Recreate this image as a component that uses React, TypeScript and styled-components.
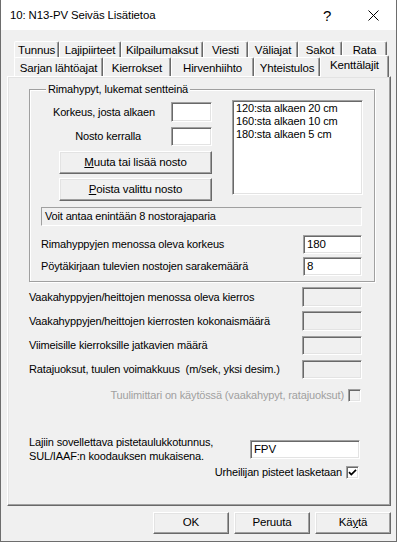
import React from "react";
import styled, { createGlobalStyle, css } from "styled-components";

const GlobalStyle = createGlobalStyle`
  html, body { margin: 0; padding: 0; background: #f0f0f0; }
  body {
    font-family: "Liberation Sans", Arial, sans-serif;
    font-size: 11px;
    color: #000;
  }
  * { box-sizing: border-box; }
`;

const sunken = css`
  border: 1px solid;
  border-color: #a0a0a0 #ffffff #ffffff #a0a0a0;
  box-shadow: inset 1px 1px 0 #696969, inset -1px -1px 0 #e3e3e3;
`;

const raised = css`
  border: 1px solid;
  border-color: #ffffff #696969 #696969 #ffffff;
  box-shadow: inset -1px -1px 0 #a0a0a0, inset 1px 1px 0 #e3e3e3;
`;

const Window = styled.div`
  width: 397px;
  height: 542px;
  display: flex;
  flex-direction: column;
  border: 1px solid #6d6d6d;
  border-top: none;
  background: #f0f0f0;
  line-height: 13px;
  letter-spacing: -0.15px;
`;

const TitleBar = styled.div`
  height: 30px;
  flex: none;
  background: #ffffff;
  display: flex;
  align-items: center;
  padding-left: 9px;
  font-size: 11.4px;
  letter-spacing: -0.1px;
`;

const Title = styled.div`
  flex: 1;
  padding-top: 1px;
`;

const CaptionButton = styled.div<{ $w: number }>`
  width: ${(p) => p.$w}px;
  height: 30px;
  display: flex;
  align-items: center;
  justify-content: center;
  font-size: 15px;
`;

const Body = styled.div`
  flex: 1;
  display: flex;
  flex-direction: column;
  padding: 11px 5px 0 6px;
`;

const TabStrip = styled.div`
  display: flex;
  flex-direction: column;
  padding-left: 7px;
`;

const TabRow = styled.div<{ $h: number }>`
  display: flex;
  height: ${(p) => p.$h}px;
  align-items: flex-start;
`;

const Tab = styled.div<{ $w: number; $h: number; $pt: number; $active?: boolean }>`
  position: relative;
  width: ${(p) => p.$w}px;
  height: ${(p) => p.$h}px;
  flex: none;
  border: 1px solid;
  border-bottom: none;
  border-color: #ffffff #696969 transparent #ffffff;
  box-shadow: inset -1px 0 0 #a0a0a0;
  border-radius: 2px 2px 0 0;
  background: #f0f0f0;
  display: flex;
  justify-content: center;
  padding-top: ${(p) => p.$pt}px;
  white-space: nowrap;
  font-size: 11.5px;
  ${(p) =>
    p.$active &&
    css`
      margin-top: -2px;
      z-index: 2;
    `}
`;

const Panel = styled.div`
  position: relative;
  z-index: 1;
  height: 430px;
  ${raised};
  padding: 6px 15px 0 21px;
  display: flex;
  flex-direction: column;
`;

const Group = styled.fieldset`
  margin: 0;
  padding: 4px 11px 5px 11px;
  border: 1px solid #a0a0a0;
  box-shadow: 1px 1px 0 #ffffff, inset 1px 1px 0 #ffffff;
  min-width: 0;
`;

const Legend = styled.legend`
  margin-left: 5px;
  padding: 0 2px;
  line-height: 13px;
  background: #f0f0f0;
  position: relative;
  z-index: 1;
`;

const TopSection = styled.div`
  display: flex;
  align-items: flex-start;
`;

const LeftCol = styled.div`
  width: 171px;
  display: flex;
  flex-direction: column;
`;

const FieldRow = styled.div<{ $mt: number; $h: number; $gap: number }>`
  display: flex;
  justify-content: flex-end;
  align-items: center;
  margin-top: ${(p) => p.$mt}px;
  height: ${(p) => p.$h}px;
  gap: ${(p) => p.$gap}px;
`;

const TextBox = styled.div<{ $w: number; $h: number; $disabled?: boolean; $mr?: number; $mt?: number }>`
  width: ${(p) => p.$w}px;
  height: ${(p) => p.$h}px;
  flex: none;
  ${sunken};
  background: ${(p) => (p.$disabled ? "#f0f0f0" : "#ffffff")};
  margin-right: ${(p) => p.$mr ?? 0}px;
  margin-top: ${(p) => p.$mt ?? 0}px;
  padding: 0 3px;
  display: flex;
  align-items: center;
  font-size: 11.5px;
`;

const PushButton = styled.div<{ $w: number; $h: number; $mt?: number; $ml?: number }>`
  width: ${(p) => p.$w}px;
  height: ${(p) => p.$h}px;
  flex: none;
  margin-top: ${(p) => p.$mt ?? 0}px;
  margin-left: ${(p) => p.$ml ?? 0}px;
  ${raised};
  background: #f0f0f0;
  display: flex;
  align-items: center;
  justify-content: center;
  padding-bottom: 1px;
  font-size: 11.5px;
`;

const ListBox = styled.div`
  margin-left: 20px;
  width: 131px;
  height: 95px;
  ${sunken};
  background: #ffffff;
  padding: 1px 3px 0;
`;

const ListItem = styled.div`
  height: 13px;
  line-height: 13px;
  white-space: nowrap;
`;

const InfoBox = styled.div`
  margin-top: 6px;
  margin-right: 1px;
  height: 19px;
  border: 1px solid;
  border-color: #a0a0a0 #ffffff #ffffff #a0a0a0;
  padding-left: 3px;
  display: flex;
  align-items: center;
`;

const LineRow = styled.div<{ $mt: number; $h: number }>`
  display: flex;
  align-items: center;
  justify-content: space-between;
  margin-top: ${(p) => p.$mt}px;
  height: ${(p) => p.$h}px;
  white-space: nowrap;
`;

const CheckRow = styled.div<{ $mt: number; $mr: number; $disabled?: boolean }>`
  display: flex;
  align-items: center;
  justify-content: flex-end;
  gap: 4px;
  margin-top: ${(p) => p.$mt}px;
  margin-right: ${(p) => p.$mr}px;
  height: 13px;
  white-space: nowrap;
  color: ${(p) => (p.$disabled ? "#a0a0a0" : "#000000")};
`;

const CheckBox = styled.div<{ $disabled?: boolean }>`
  width: 13px;
  height: 13px;
  flex: none;
  ${sunken};
  background: ${(p) => (p.$disabled ? "#f0f0f0" : "#ffffff")};
  display: flex;
  align-items: center;
  justify-content: center;
`;

const PointsRow = styled.div`
  display: flex;
  justify-content: space-between;
  align-items: flex-start;
  margin-top: 33px;
`;

const PointsText = styled.div`
  line-height: 14px;
`;

const ButtonBar = styled.div`
  display: flex;
  justify-content: flex-end;
  gap: 5px;
  margin-top: 6px;
`;

const row1 = [
  { label: "Tunnus", w: 45 },
  { label: "Lajipiirteet", w: 62 },
  { label: "Kilpailumaksut", w: 82 },
  { label: "Viesti", w: 45 },
  { label: "Väliajat", w: 50 },
  { label: "Sakot", w: 44 },
  { label: "Rata", w: 45 },
];

const row2 = [
  { label: "Sarjan lähtöajat", w: 89 },
  { label: "Kierrokset", w: 68 },
  { label: "Hirvenhiihto", w: 83 },
  { label: "Yhteistulos", w: 66 },
  { label: "Kenttälajit", w: 69, active: true },
];

const lowerRows = [
  { label: "Vaakahyppyjen/heittojen menossa oleva kierros", mt: 5, h: 20 },
  { label: "Vaakahyppyjen/heittojen kierrosten kokonaismäärä", mt: 4, h: 20 },
  { label: "Viimeisille kierroksille jatkavien määrä", mt: 5, h: 19 },
  { label: "Ratajuoksut, tuulen voimakkuus\u00a0 (m/sek, yksi desim.)", mt: 5, h: 19 },
];

const Check = () => (
  <svg width="9" height="9" viewBox="0 0 9 9">
    <polyline points="1,4.2 3.3,6.6 8,1.8" fill="none" stroke="#000" strokeWidth="1.7" />
  </svg>
);

const CloseIcon = () => (
  <svg width="11" height="11" viewBox="0 0 11 11">
    <path d="M0.5 0.5 L10.5 10.5 M10.5 0.5 L0.5 10.5" stroke="#000" strokeWidth="1" />
  </svg>
);

export default function App() {
  return (
    <>
      <GlobalStyle />
      <Window>
        <TitleBar>
          <Title>10: N13-PV Seiväs Lisätietoa</Title>
          <CaptionButton $w={46}>?</CaptionButton>
          <CaptionButton $w={46}>
            <CloseIcon />
          </CaptionButton>
        </TitleBar>
        <Body>
          <TabStrip>
            <TabRow $h={16}>
              {row1.map((t) => (
                <Tab key={t.label} $w={t.w} $h={17} $pt={2}>
                  {t.label}
                </Tab>
              ))}
            </TabRow>
            <TabRow $h={19}>
              {row2.map((t) => (
                <Tab key={t.label} $w={t.w} $h={t.active ? 22 : 19} $pt={t.active ? 3 : 4} $active={t.active}>
                  {t.label}
                </Tab>
              ))}
            </TabRow>
          </TabStrip>
          <Panel>
            <Group>
              <Legend>Rimahypyt, lukemat sentteinä</Legend>
              <TopSection>
                <LeftCol>
                  <FieldRow $mt={2} $h={20} $gap={16}>
                    <span>Korkeus, josta alkaen</span>
                    <TextBox $w={41} $h={20} />
                  </FieldRow>
                  <FieldRow $mt={5} $h={19} $gap={30}>
                    <span>Nosto kerralla</span>
                    <TextBox $w={41} $h={19} />
                  </FieldRow>
                  <PushButton $w={153} $h={23} $mt={5} $ml={18}>
                    <span>
                      <u>M</u>uuta tai lisää nosto
                    </span>
                  </PushButton>
                  <PushButton $w={153} $h={23} $mt={4} $ml={18}>
                    <span>
                      <u>P</u>oista valittu nosto
                    </span>
                  </PushButton>
                </LeftCol>
                <ListBox>
                  <ListItem>120:sta alkaen 20 cm</ListItem>
                  <ListItem>160:sta alkaen 10 cm</ListItem>
                  <ListItem>180:sta alkaen 5 cm</ListItem>
                </ListBox>
              </TopSection>
              <InfoBox>Voit antaa enintään 8 nostorajaparia</InfoBox>
              <LineRow $mt={9} $h={19}>
                <span>Rimahyppyjen menossa oleva korkeus</span>
                <TextBox $w={59} $h={19} $mr={1}>180</TextBox>
              </LineRow>
              <LineRow $mt={3} $h={19}>
                <span>Pöytäkirjaan tulevien nostojen sarakemäärä</span>
                <TextBox $w={59} $h={19} $mr={1}>8</TextBox>
              </LineRow>
            </Group>
            {lowerRows.map((r) => (
              <LineRow key={r.label} $mt={r.mt} $h={r.h}>
                <span>{r.label}</span>
                <TextBox $w={60} $h={r.h} $mr={13} $disabled />
              </LineRow>
            ))}
            <CheckRow $mt={10} $mr={14} $disabled>
              <span>Tuulimittari on käytössä (vaakahypyt, ratajuoksut)</span>
              <CheckBox $disabled />
            </CheckRow>
            <PointsRow>
              <PointsText>
                Lajiin sovellettava pistetaulukkotunnus,
                <br />
                SUL/IAAF:n koodauksen mukaisena.
              </PointsText>
              <TextBox $w={110} $h={19} $mr={15} $mt={5}>
                FPV
              </TextBox>
            </PointsRow>
            <CheckRow $mt={3} $mr={16}>
              <span>Urheilijan pisteet lasketaan</span>
              <CheckBox>
                <Check />
              </CheckBox>
            </CheckRow>
          </Panel>
          <ButtonBar>
            <PushButton $w={76} $h={22}>OK</PushButton>
            <PushButton $w={76} $h={22}>Peruuta</PushButton>
            <PushButton $w={76} $h={22}>
              <span>
                Kä<u>y</u>tä
              </span>
            </PushButton>
          </ButtonBar>
        </Body>
      </Window>
    </>
  );
}
